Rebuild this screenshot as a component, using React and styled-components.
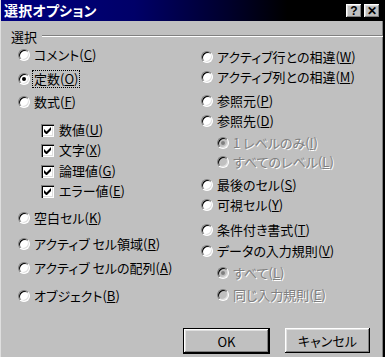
import React from "react";
import styled, { createGlobalStyle } from "styled-components";

const GlobalStyle = createGlobalStyle`
  html, body {
    margin: 0;
    padding: 0;
    background: #c0c0c0;
  }
  body {
    font-family: "Noto Sans CJK JP", "Liberation Sans", sans-serif;
    font-size: 13px;
    font-feature-settings: "palt";
  }
`;

const Window = styled.div`
  width: 385px;
  height: 357px;
  box-sizing: border-box;
  background: #c0c0c0;
  border-left: 1px solid #dfdfdf;
  border-right: 2px solid #000;
  box-shadow: inset -1px 0 #808080;
  display: flex;
  flex-direction: column;
  overflow: hidden;
`;

const TitleBar = styled.div`
  height: 21px;
  display: flex;
  align-items: center;
  justify-content: space-between;
  padding: 0 3px 0 3px;
  background: linear-gradient(to right, #000080 0%, #000068 35%, #00002a 60%, #000 75%, #000 100%);
`;

const Title = styled.span`
  color: #fff;
  font-weight: bold;
  font-size: 14px;
  line-height: 21px;
  letter-spacing: 0.2px;
`;

const TitleButtons = styled.div`
  display: flex;
  gap: 2px;
`;

const TitleButton = styled.div`
  width: 16px;
  height: 14px;
  box-sizing: border-box;
  background: #c0c0c0;
  box-shadow: inset -1px -1px #000, inset 1px 1px #fff, inset -2px -2px #808080,
    inset 2px 2px #dfdfdf;
  display: flex;
  align-items: center;
  justify-content: center;
  font-family: "Liberation Sans", sans-serif;
  font-weight: bold;
  font-size: 12px;
  color: #000;
`;

const Body = styled.div`
  flex: 1;
  display: flex;
  flex-direction: column;
  padding: 6px 0 0 10px;
`;

const GroupHeader = styled.div`
  display: flex;
  align-items: center;
  height: 18px;
  gap: 5px;
`;

const GroupLabel = styled.span`
  color: #000;
  font-size: 13px;
`;

const Rule = styled.div`
  flex: 1;
  height: 0;
  border-top: 1px solid #808080;
  border-bottom: 1px solid #fff;
`;

const Columns = styled.div`
  display: grid;
  grid-template-columns: 180px 1fr;
`;

const Column = styled.div`
  display: flex;
  flex-direction: column;
`;

const Option = styled.div`
  display: flex;
  align-items: center;
  height: 18px;
  margin-top: ${(p) => p.$mt || 0}px;
  padding-left: ${(p) => p.$indent || 0}px;
  gap: ${(p) => p.$gap || 3}px;
  white-space: nowrap;
`;

const Label = styled.span`
  color: ${(p) => (p.$disabled ? "#808080" : "#000")};
  text-shadow: ${(p) => (p.$disabled ? "1px 1px #fff" : "none")};
  line-height: 16px;
  padding: 0 1px;
  border: 1px dotted ${(p) => (p.$focused ? "#000" : "transparent")};
  u {
    text-decoration: underline;
    text-underline-offset: 1px;
  }
`;

const RadioCircle = styled.span`
  width: 12px;
  height: 12px;
  flex: none;
  box-sizing: border-box;
  border-radius: 50%;
  border: 1px solid;
  border-color: #808080 #fff #fff #808080;
  background: ${(p) => (p.$disabled ? "#c0c0c0" : "#fff")};
  box-shadow: inset 1px 1px #000, inset -1px -1px #dfdfdf;
  display: flex;
  align-items: center;
  justify-content: center;
`;

const RadioDot = styled.span`
  width: 4px;
  height: 4px;
  border-radius: 50%;
  background: ${(p) => (p.$disabled ? "#808080" : "#000")};
`;

const CheckBox = styled.span`
  width: 13px;
  height: 13px;
  flex: none;
  box-sizing: border-box;
  background: #fff;
  box-shadow: inset 1px 1px #808080, inset 2px 2px #000, inset -1px -1px #fff,
    inset -2px -2px #dfdfdf;
  display: flex;
  align-items: center;
  justify-content: center;
`;

const Footer = styled.div`
  display: flex;
  justify-content: flex-end;
  gap: 15px;
  padding: 23px 13px 0 0;
`;

const Button = styled.button`
  width: ${(p) => (p.$default ? 87 : 85)}px;
  height: ${(p) => (p.$default ? 26 : 25)}px;
  box-sizing: border-box;
  padding: 0;
  background: #c0c0c0;
  border: ${(p) => (p.$default ? "1px solid #000" : "none")};
  box-shadow: inset -1px -1px #000, inset 1px 1px #fff, inset -2px -2px #808080,
    inset 2px 2px #dfdfdf;
  font-family: "Noto Sans CJK JP", "Liberation Sans", sans-serif;
  font-feature-settings: "palt";
  font-size: 13px;
  color: #000;
`;

function Radio({ checked, disabled }) {
  return (
    <RadioCircle $disabled={disabled}>
      {checked && <RadioDot $disabled={disabled} />}
    </RadioCircle>
  );
}

function Check() {
  return (
    <CheckBox>
      <svg width="7" height="7" viewBox="0 0 7 7">
        <path d="M0 2v3l2 2h1l4-4V0L2.5 4.5z" fill="#000" />
      </svg>
    </CheckBox>
  );
}

function Text({ text, k, disabled, focused }) {
  return (
    <Label $disabled={disabled} $focused={focused}>
      {text}(<u>{k}</u>)
    </Label>
  );
}

const leftItems = [
  { type: "radio", text: "コメント", k: "C", mt: 1 },
  { type: "radio", text: "定数", k: "O", mt: 6, checked: true, focused: true },
  { type: "radio", text: "数式", k: "F", mt: 5 },
  { type: "check", text: "数値", k: "U", mt: 10 },
  { type: "check", text: "文字", k: "X", mt: 2 },
  { type: "check", text: "論理値", k: "G", mt: 3 },
  { type: "check", text: "エラー値", k: "E", mt: 2 },
  { type: "radio", text: "空白セル", k: "K", mt: 9 },
  { type: "radio", text: "アクティブ セル領域", k: "R", mt: 8 },
  { type: "radio", text: "アクティブ セルの配列", k: "A", mt: 6 },
  { type: "radio", text: "オブジェクト", k: "B", mt: 10 },
];

const rightItems = [
  { text: "アクティブ行との相違", k: "W", mt: 3 },
  { text: "アクティブ列との相違", k: "M", mt: 2 },
  { text: "参照元", k: "P", mt: 6 },
  { text: "参照先", k: "D", mt: 2 },
  { text: "1 レベルのみ", k: "I", mt: 4, sub: true, checked: true },
  { text: "すべてのレベル", k: "L", mt: 1, sub: true },
  { text: "最後のセル", k: "S", mt: 5 },
  { text: "可視セル", k: "Y", mt: 2 },
  { text: "条件付き書式", k: "T", mt: 7 },
  { text: "データの入力規則", k: "V", mt: 3 },
  { text: "すべて", k: "L", mt: 4, sub: true, checked: true },
  { text: "同じ入力規則", k: "E", mt: 4, sub: true },
];

export default function App() {
  return (
    <>
      <GlobalStyle />
      <Window>
        <TitleBar>
          <Title>選択オプション</Title>
          <TitleButtons>
            <TitleButton>?</TitleButton>
            <TitleButton>✕</TitleButton>
          </TitleButtons>
        </TitleBar>
        <Body>
          <GroupHeader>
            <GroupLabel>選択</GroupLabel>
            <Rule />
          </GroupHeader>
          <Columns>
            <Column>
              {leftItems.map((it) =>
                it.type === "radio" ? (
                  <Option key={it.k} $mt={it.mt} $indent={7} $gap={2}>
                    <Radio checked={it.checked} />
                    <Text text={it.text} k={it.k} focused={it.focused} />
                  </Option>
                ) : (
                  <Option key={it.k} $mt={it.mt} $indent={30} $gap={3}>
                    <Check />
                    <Text text={it.text} k={it.k} />
                  </Option>
                )
              )}
            </Column>
            <Column>
              {rightItems.map((it, i) => (
                <Option key={i} $mt={it.mt} $indent={it.sub ? 26 : 10} $gap={2}>
                  <Radio checked={it.checked} disabled={it.sub} />
                  <Text text={it.text} k={it.k} disabled={it.sub} />
                </Option>
              ))}
            </Column>
          </Columns>
          <Footer>
            <Button $default>OK</Button>
            <Button>キャンセル</Button>
          </Footer>
        </Body>
      </Window>
    </>
  );
}
